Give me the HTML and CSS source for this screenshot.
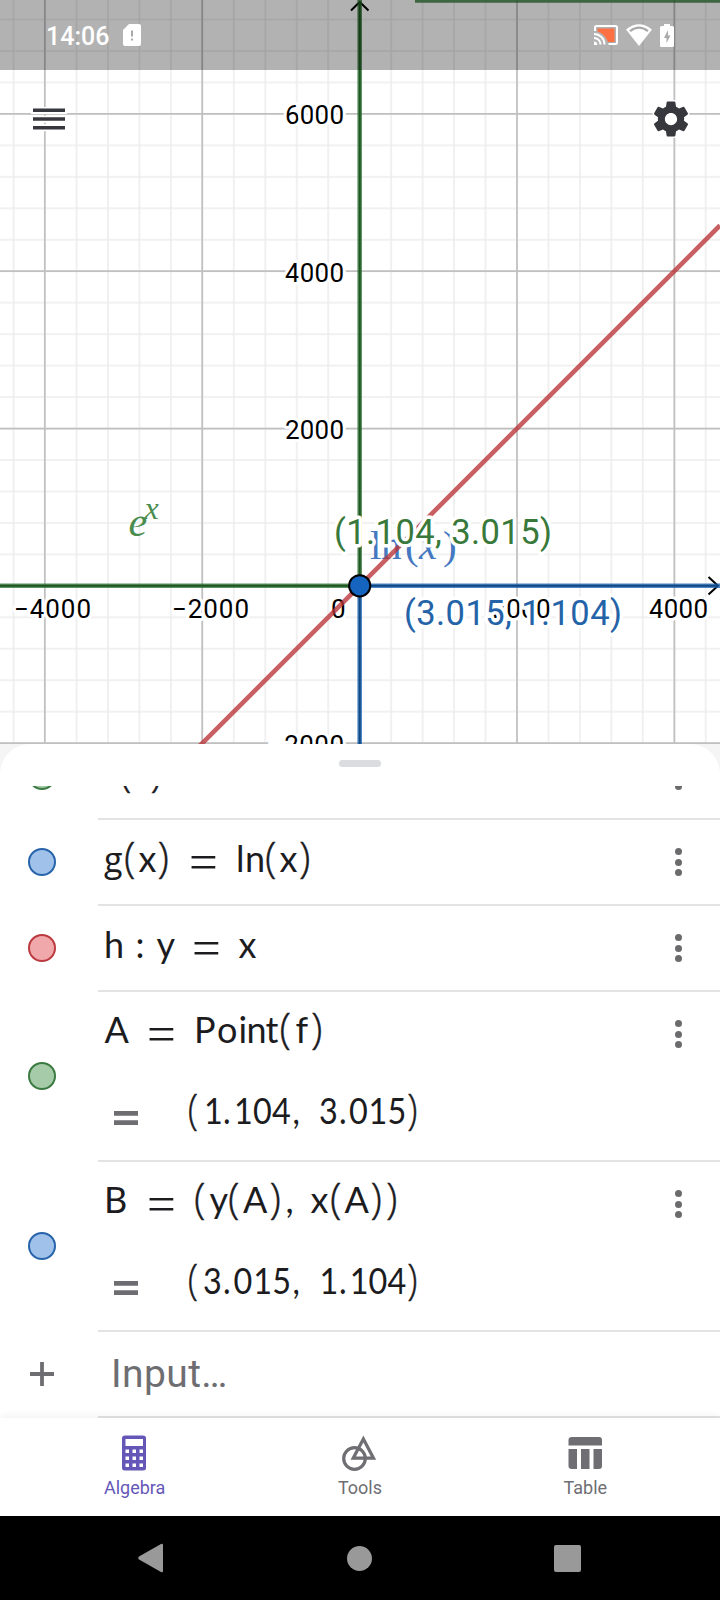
FILE: index.html
```html
<!DOCTYPE html>
<html lang="en">
<head>
  <meta charset="UTF-8">
  <meta name="viewport" content="width=device-width, initial-scale=1.0">
  <title>Graphing Calculator</title>
  <link rel="stylesheet" href="styles.css">
</head>
<body>
  <div class="screen">
    <section class="graph">
      <svg class="plot" width="720" height="744" viewBox="0 0 720 744">
        <defs>
          <pattern id="minor" x="359.67" y="585.83" width="31.46" height="31.46" patternUnits="userSpaceOnUse">
            <path class="grid-minor" d="M0 0H31.46M0 31.46H31.46M0 0V31.46M31.46 0V31.46"/>
          </pattern>
        </defs>
        <rect width="720" height="744" fill="url(#minor)"/>
        <path class="grid-major" d="M44.8 0V744M202.2 0V744M517 0V744M674.4 0V744M0 113.8H720M0 271.2H720M0 428.6H720M0 743.2H720"/>

        <g class="ticks">
          <text x="285" y="124" textLength="59">6000</text>
          <text x="285" y="282" textLength="59">4000</text>
          <text x="285" y="439" textLength="59">2000</text>
          <text x="269" y="754" textLength="75">−2000</text>
          <text x="14" y="618" textLength="77">−4000</text>
          <text x="172" y="618" textLength="77">−2000</text>
          <text x="331" y="618">0</text>
          <text x="491.5" y="618" textLength="59">2000</text>
          <text x="649" y="618" textLength="59">4000</text>
        </g>

        <path class="axis" d="M359.7 744V2M351 10.5L359.7 2L368.5 10.5M0 585.8H718M708.5 577L718 585.8L708.5 594.5"/>
        <path class="curve green" d="M0 585.8H359.7V0M415 0.5H720"/>
        <path class="curve blue" d="M359.7 744V585.8H720"/>

        <text class="math green-text" x="128.5" y="536" font-size="42">e</text>
        <text class="math green-text" x="144.5" y="519" font-size="32">x</text>
        <text class="math blue-text ln" y="558.5" x="370 381 405 419 443" font-size="41">ln(<tspan class="it">x</tspan>)</text>

        <path class="curve red" d="M195 750.5L720 225.5"/>
        <circle class="point" cx="359.7" cy="585.8" r="10.6"/>
        <text class="label green-label" x="334" y="543.5" textLength="218">(1.104, 3.015)</text>
        <text class="label blue-label" x="404" y="625" textLength="218">(3.015, 1.104)</text>
      </svg>

      <header class="status-bar">
        <span class="time">14:06</span>
        <svg class="sim" width="18" height="22" viewBox="0 0 18 22">
          <path fill="#fff" d="M6 0H16Q18 0 18 2V20Q18 22 16 22H2Q0 22 0 20V6Z"/>
          <path stroke="#aaa" stroke-width="2" d="M9 6.5V12.5M9 14.5V16.5"/>
        </svg>
        <div class="status-icons">
          <svg width="24" height="20" viewBox="0 0 24 20">
            <path fill="#ff7043" d="M3.5 3.5H20.5V17H14Q11 9 3.5 6.5Z"/>
            <path fill="none" stroke="#fff" stroke-width="2" d="M1 6V2.5Q1 1 2.5 1H21.5Q23 1 23 2.5V17.5Q23 19 21.5 19H14.5M0 9A10.5 10.5 0 0 1 10.5 19.5M0 13A6.5 6.5 0 0 1 6.5 19.5"/>
            <path fill="#fff" d="M0 16.5A3.3 3.3 0 0 1 3.3 20H0Z"/>
          </svg>
          <svg width="26" height="22" viewBox="0 0 26 22">
            <path fill="#fff" d="M0 5.5Q13-5 26 5.5L13 22Z"/>
            <path fill="none" stroke="#aaa" stroke-width="2.2" d="M4 7.2Q13 .2 22 7.2"/>
          </svg>
          <svg width="14" height="23" viewBox="0 0 14 23">
            <path fill="#fff" d="M4 0H10V2H12.5Q14 2 14 3.5V21.5Q14 23 12.5 23H1.5Q0 23 0 21.5V3.5Q0 2 1.5 2H4Z"/>
            <path fill="#aaa" d="M8 6L4 14H6.5V19L10.5 11.5H8Z"/>
          </svg>
        </div>
      </header>

      <div class="toolbar">
        <svg class="menu" width="36" height="26" viewBox="0 0 36 26">
          <path stroke="#fff" stroke-width="7" d="M0 4.5H36M0 13.2H36M0 21.8H36"/>
          <path stroke="#37373e" stroke-width="3.6" d="M2 4.3H34M2 13H34M2 21.7H34"/>
        </svg>
        <svg class="gear" width="42" height="42" viewBox="0 0 24 24">
          <circle cx="12" cy="12" r="4" fill="#fff"/>
          <path d="M19.43 12.98c.04-.32.07-.64.07-.98s-.03-.66-.07-.98l2.11-1.65c.19-.15.24-.42.12-.64l-2-3.46c-.12-.22-.39-.3-.61-.22l-2.49 1c-.52-.4-1.08-.73-1.69-.98l-.38-2.65C14.46 2.18 14.25 2 14 2h-4c-.25 0-.46.18-.49.42l-.38 2.65c-.61.25-1.17.59-1.69.98l-2.49-1c-.23-.09-.49 0-.61.22l-2 3.46c-.13.22-.07.49.12.64l2.11 1.65c-.04.32-.07.65-.07.98s.03.66.07.98l-2.11 1.65c-.19.15-.24.42-.12.64l2 3.46c.12.22.39.3.61.22l2.49-1c.52.4 1.08.73 1.69.98l.38 2.65c.03.24.24.42.49.42h4c.25 0 .46-.18.49-.42l.38-2.65c.61-.25 1.17-.59 1.69-.98l2.49 1c.23.09.49 0 .61-.22l2-3.46c.12-.22.07-.49-.12-.64l-2.11-1.65zM12 15.5c-1.93 0-3.5-1.57-3.5-3.5s1.57-3.5 3.5-3.5 3.5 1.57 3.5 3.5-1.57 3.5-3.5 3.5z"/>
        </svg>
      </div>
    </section>

    <main class="sheet-wrap">
      <div class="sheet">
        <div class="handle"></div>
        <div class="rows">
          <div class="row first">
            <div class="marker"><span class="dot dot-green"></span></div>
            <div class="content">
              <svg class="formula" width="480" height="84" viewBox="98 0 480 84">
                <text y="51.5" x="107 120 134 150.5">f<tspan class="paren">(</tspan>x<tspan class="paren">)</tspan></text>
              </svg>
              <span class="more"><i></i><i></i><i></i></span>
            </div>
          </div>
          <div class="row">
            <div class="marker"><span class="dot dot-blue"></span></div>
            <div class="content">
              <svg class="formula" width="480" height="84" viewBox="98 0 480 84">
                <text y="51.5" x="104 124 138.5 157.5"><tspan class="g">g</tspan><tspan class="paren">(</tspan>x<tspan class="paren">)</tspan></text>
                <text class="eq" x="189" y="59">=</text>
                <text y="51.5" x="236 245 265 279.5 299">ln<tspan class="paren">(</tspan>x<tspan class="paren">)</tspan></text>
              </svg>
              <span class="more"><i></i><i></i><i></i></span>
            </div>
          </div>
          <div class="row">
            <div class="marker"><span class="dot dot-red"></span></div>
            <div class="content">
              <svg class="formula" width="480" height="84" viewBox="98 0 480 84">
                <text y="51.5" x="104 135.5 156.5">h:y</text>
                <text class="eq" x="192" y="59">=</text>
                <text y="51.5" x="238.5">x</text>
              </svg>
              <span class="more"><i></i><i></i><i></i></span>
            </div>
          </div>
          <div class="row tall">
            <div class="marker"><span class="dot dot-green"></span></div>
            <div class="content">
              <svg class="formula" width="480" height="168" viewBox="98 0 480 168">
                <text y="51" x="104.5">A</text>
                <text class="eq" x="147" y="59">=</text>
                <text y="51" x="194 217 238.5 246.5 265.5 279.5 295.5 311">Point<tspan class="paren">(</tspan>f<tspan class="paren">)</tspan></text>
                <path class="result-eq" d="M114 121.3H138M114 130.7H138"/>
                <text transform="scale(.9 1)" y="132" x="208.5 226.6 247.8 259.9 281.1 302.2 325"><tspan class="paren">(</tspan>1.104,</text>
                <text transform="scale(.9 1)" y="132" x="354.4 376.7 387.7 409.5 430.6 452.5">3.015<tspan class="paren">)</tspan></text>
              </svg>
              <span class="more"><i></i><i></i><i></i></span>
            </div>
          </div>
          <div class="row tall">
            <div class="marker"><span class="dot dot-blue"></span></div>
            <div class="content">
              <svg class="formula" width="480" height="168" viewBox="98 0 480 168">
                <text y="51" x="104">B</text>
                <text class="eq" x="147" y="59">=</text>
                <text y="51" x="194 209.5 228 243 269.5 285.5"><tspan class="paren">(</tspan>y<tspan class="paren">(</tspan>A<tspan class="paren">)</tspan>,</text>
                <text y="51" x="310.5 330 344.5 370.5 386">x<tspan class="paren">(</tspan>A<tspan class="paren">))</tspan></text>
                <path class="result-eq" d="M114 121.3H138M114 130.7H138"/>
                <text transform="scale(.9 1)" y="132" x="208.5 225.7 247.8 259.5 281.5 302.5 325"><tspan class="paren">(</tspan>3.015,</text>
                <text transform="scale(.9 1)" y="132" x="355 376.7 388.5 409.5 430.5 452.5">1.104<tspan class="paren">)</tspan></text>
              </svg>
              <span class="more"><i></i><i></i><i></i></span>
            </div>
          </div>
          <div class="row input-row">
            <div class="marker">
              <svg width="24" height="24" viewBox="0 0 24 24"><path stroke="#6e6e72" stroke-width="3.8" d="M12 0V24M0 12H24"/></svg>
            </div>
            <div class="content"><span class="placeholder">Input…</span></div>
          </div>
        </div>
      </div>
    </main>

    <nav class="tabs">
      <div class="tab active">
        <svg width="36" height="36" viewBox="0 0 36 36">
          <path fill="currentColor" fill-rule="evenodd" d="M8 .5H26Q29 .5 29 3V33Q29 35.5 26 35.5H8Q5 35.5 5 33V3Q5 .5 8 .5ZM8.5 4V11H26V4ZM8.5 14.5V18H12V14.5ZM15.500 14.5V18H19V14.5ZM22.5 14.5V18H26V14.5ZM8.5 21.5V25H12V21.5ZM15.5 21.5V25H19V21.5ZM22.5 21.5V25H26V21.5ZM8.5 28.5V32H12V28.5ZM15.5 28.5V32H19V28.5ZM22.5 28.5V32H26V28.5Z"/>
        </svg>
        <span>Algebra</span>
      </div>
      <div class="tab">
        <svg width="36" height="36" viewBox="0 0 36 36">
          <g fill="none" stroke="currentColor" stroke-width="3.2">
            <circle cx="12.5" cy="23.5" r="10.8"/>
            <path d="M21.4 4L31.5 23.2H11.2Z"/>
          </g>
        </svg>
        <span>Tools</span>
      </div>
      <div class="tab">
        <svg width="36" height="36" viewBox="0 0 36 36">
          <path fill="currentColor" d="M5 2H32Q35 2 35 5V10.5H1.5V5Q1.5 2 5 2ZM1.5 14H10V34H5Q1.5 34 1.5 31ZM14 14H22.5V34H14ZM26.5 14H35V31Q35 34 32 34H26.5Z"/>
        </svg>
        <span>Table</span>
      </div>
    </nav>

    <footer class="system-nav">
      <svg width="26" height="30" viewBox="0 0 26 30"><path fill="#999" d="M25 2V28Q25 30 23 29L1 16.5Q-.5 15 1 13.5L23 1Q25 0 25 2Z"/></svg>
      <span class="home"></span>
      <span class="recent"></span>
    </footer>
  </div>
</body>
</html>
```

FILE: styles.css
```css
* {
  margin: 0;
  padding: 0;
  box-sizing: border-box;
}

body {
  background: #fff;
  font-family: Roboto, sans-serif;
}

svg {
  display: block;
}

.screen {
  width: 720px;
  height: 1600px;
  display: flex;
  flex-direction: column;
  overflow: hidden;
}

/* graph */
.graph {
  position: relative;
  height: 744px;
  flex: none;
}

.grid-minor {
  stroke: #ededed;
  stroke-width: 1.6;
}

.grid-major {
  stroke: #c0c0c0;
  stroke-width: 1.7;
}

.ticks text {
  font-size: 26px;
  fill: #000;
  stroke: #fff;
  stroke-width: 6px;
  stroke-linejoin: round;
  paint-order: stroke;
}

.axis {
  fill: none;
  stroke: #000;
  stroke-width: 2;
}

.curve {
  fill: none;
  stroke-width: 4.6;
}

.green {
  stroke: rgba(40, 112, 45, 0.76);
}

.blue {
  stroke: rgba(21, 95, 175, 0.76);
}

.red {
  stroke: rgba(185, 50, 54, 0.78);
}

.math {
  font-family: "Liberation Serif", serif;
  font-style: italic;
}

.green-text {
  fill: #4a8c4d;
}

.blue-text {
  fill: #4478c0;
}

.ln {
  font-style: normal;
}

.it {
  font-style: italic;
}

.point {
  fill: #1565c0;
  stroke: #000;
  stroke-width: 2;
}

.label {
  font-size: 34.5px;
  stroke: #fff;
  stroke-width: 7px;
  stroke-linejoin: round;
  paint-order: stroke;
}

.green-label {
  fill: #38793b;
}

.blue-label {
  fill: #2563a8;
}

.status-bar {
  position: absolute;
  top: 0;
  left: 0;
  width: 720px;
  height: 70px;
  padding: 0 46px;
  display: flex;
  align-items: center;
  background: rgba(0, 0, 0, 0.3);
  color: #fff;
}

.time {
  font-size: 25px;
  font-weight: 500;
  line-height: 30px;
  margin-top: 3px;
  width: 77px;
}

.status-icons {
  display: flex;
  align-items: center;
  gap: 8px;
  margin-left: auto;
}

.toolbar {
  position: absolute;
  top: 98px;
  left: 0;
  width: 720px;
  padding: 0 28px 0 31px;
  display: flex;
  align-items: center;
  justify-content: space-between;
}

.gear path {
  fill: #37373e;
  stroke: #fff;
  stroke-width: 1.6px;
  paint-order: stroke;
}

/* algebra sheet */
.sheet-wrap {
  height: 674px;
  flex: none;
  background: #f5f5f5;
}

.sheet {
  height: 674px;
  background: #fff;
  border-radius: 30px 30px 0 0;
  overflow: hidden;
}

.handle {
  width: 42px;
  height: 7px;
  margin: 16px auto 19px;
  border-radius: 4px;
  background: #dadce0;
}

.rows {
  height: 632px;
  overflow: hidden;
}

.row {
  display: flex;
  height: 86px;
}

.first {
  margin-top: -52px;
}

.tall {
  height: 170px;
}

.marker {
  width: 98px;
  padding: 0 0 2px 28px;
  display: flex;
  align-items: center;
}

.dot {
  width: 28px;
  height: 28px;
  border-radius: 50%;
  border: 2px solid;
}

.dot-green {
  background: #a5cba8;
  border-color: #3b7a40;
}

.dot-blue {
  background: #a0c1ea;
  border-color: #2764aa;
}

.dot-red {
  background: #f0a8aa;
  border-color: #bb3b40;
}

.content {
  flex: 1;
  display: flex;
  justify-content: space-between;
  border-bottom: 2px solid #e3e3e3;
}

.formula text {
  font-family: Lato, sans-serif;
  font-size: 36px;
  fill: #1c1c1f;
}

.formula .paren {
  font-family: "Open Sans", sans-serif;
  font-size: 42px;
  font-weight: 300;
  stroke: #1c1c1f;
  stroke-width: 0.4px;
}

.formula .g {
  font-family: "Open Sans", sans-serif;
  font-size: 34px;
}

.formula .eq {
  font-family: "Liberation Serif", serif;
  font-size: 51px;
}

.result-eq {
  stroke: #6e6e72;
  stroke-width: 4.8;
}

.more {
  width: 7px;
  height: 84px;
  margin-right: 38px;
  display: flex;
  flex-direction: column;
  justify-content: center;
  gap: 3.5px;
}

.more i {
  width: 7px;
  height: 7px;
  border-radius: 50%;
  background: #6b6b6e;
}

.input-row .marker {
  padding-left: 30px;
}

.placeholder {
  padding-left: 13px;
  font-size: 39px;
  letter-spacing: 0.4px;
  line-height: 84px;
  color: #6e6e72;
}

/* bottom tabs */
.tabs {
  height: 98px;
  flex: none;
  padding: 17px 22px 0;
  display: flex;
  background: #fff;
  box-shadow: 0 -2px 8px rgba(0, 0, 0, 0.06);
}

.tab {
  flex: 1;
  display: flex;
  flex-direction: column;
  align-items: center;
  gap: 6px;
  font-size: 18px;
  line-height: 22px;
  color: #6e6e73;
}

.active {
  color: #6557b8;
}

.system-nav {
  height: 84px;
  flex: none;
  padding: 0 139px 0 138px;
  display: flex;
  align-items: center;
  justify-content: space-between;
  background: #000;
}

.home {
  width: 25px;
  height: 25px;
  border-radius: 50%;
  background: #999;
}

.recent {
  width: 27px;
  height: 27px;
  border-radius: 2px;
  background: #999;
}
```
